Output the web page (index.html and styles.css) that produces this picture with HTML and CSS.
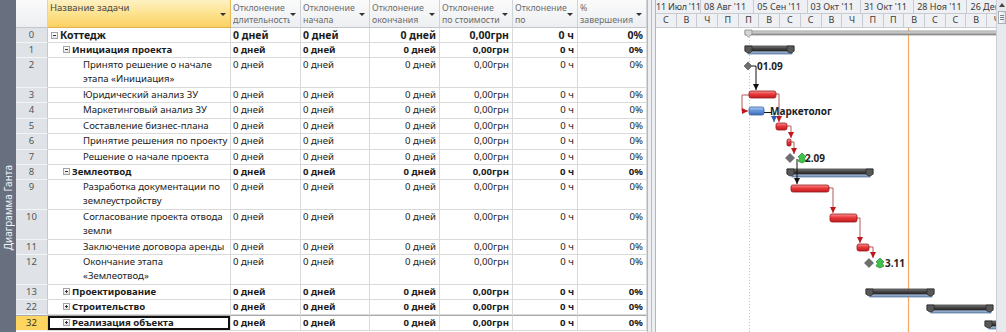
FILE: index.html
```html
<!DOCTYPE html>
<html lang="ru">
<head>
    <meta charset="UTF-8">
    <meta name="viewport" content="width=device-width, initial-scale=1.0">
    <title>Диаграмма Ганта</title>
    <link rel="stylesheet" href="styles.css">
</head>
<body>

<div class="window">
    <div class="view-bar"><span>Диаграмма Ганта</span></div>

    <div class="sheet">
        <div class="row head">
            <div class="cell num"></div>
            <div class="cell name"><span>Название задачи</span><i class="drop"></i></div>
            <div class="cell"><span>Отклонение<br>длительность</span><i class="drop"></i></div>
            <div class="cell"><span>Отклонение<br>начала</span><i class="drop"></i></div>
            <div class="cell"><span>Отклонение<br>окончания</span><i class="drop"></i></div>
            <div class="cell"><span>Отклонение<br>по стоимости</span><i class="drop"></i></div>
            <div class="cell"><span>Отклонение<br>по</span><i class="drop"></i></div>
            <div class="cell"><span>%<br>завершения</span><i class="drop"></i></div>
        </div>

        <div class="row sum project">
            <div class="cell num">0</div>
            <div class="cell name lvl0"><b class="toggle"></b>Коттедж</div>
            <div class="cell">0 дней</div>
            <div class="cell">0 дней</div>
            <div class="cell r">0 дней</div>
            <div class="cell r">0,00грн</div>
            <div class="cell r">0 ч</div>
            <div class="cell r">0%</div>
        </div>
        <div class="row sum">
            <div class="cell num">1</div>
            <div class="cell name lvl1"><b class="toggle"></b>Инициация проекта</div>
            <div class="cell">0 дней</div>
            <div class="cell">0 дней</div>
            <div class="cell r">0 дней</div>
            <div class="cell r">0,00грн</div>
            <div class="cell r">0 ч</div>
            <div class="cell r">0%</div>
        </div>
        <div class="row tall">
            <div class="cell num">2</div>
            <div class="cell name lvl2">Принято решение о начале<br>этапа «Инициация»</div>
            <div class="cell">0 дней</div>
            <div class="cell">0 дней</div>
            <div class="cell r">0 дней</div>
            <div class="cell r">0,00грн</div>
            <div class="cell r">0 ч</div>
            <div class="cell r">0%</div>
        </div>
        <div class="row">
            <div class="cell num">3</div>
            <div class="cell name lvl2">Юридический анализ ЗУ</div>
            <div class="cell">0 дней</div>
            <div class="cell">0 дней</div>
            <div class="cell r">0 дней</div>
            <div class="cell r">0,00грн</div>
            <div class="cell r">0 ч</div>
            <div class="cell r">0%</div>
        </div>
        <div class="row">
            <div class="cell num">4</div>
            <div class="cell name lvl2">Маркетинговый анализ ЗУ</div>
            <div class="cell">0 дней</div>
            <div class="cell">0 дней</div>
            <div class="cell r">0 дней</div>
            <div class="cell r">0,00грн</div>
            <div class="cell r">0 ч</div>
            <div class="cell r">0%</div>
        </div>
        <div class="row">
            <div class="cell num">5</div>
            <div class="cell name lvl2">Составление бизнес-плана</div>
            <div class="cell">0 дней</div>
            <div class="cell">0 дней</div>
            <div class="cell r">0 дней</div>
            <div class="cell r">0,00грн</div>
            <div class="cell r">0 ч</div>
            <div class="cell r">0%</div>
        </div>
        <div class="row">
            <div class="cell num">6</div>
            <div class="cell name lvl2">Принятие решения по проекту</div>
            <div class="cell">0 дней</div>
            <div class="cell">0 дней</div>
            <div class="cell r">0 дней</div>
            <div class="cell r">0,00грн</div>
            <div class="cell r">0 ч</div>
            <div class="cell r">0%</div>
        </div>
        <div class="row">
            <div class="cell num">7</div>
            <div class="cell name lvl2">Решение о начале проекта</div>
            <div class="cell">0 дней</div>
            <div class="cell">0 дней</div>
            <div class="cell r">0 дней</div>
            <div class="cell r">0,00грн</div>
            <div class="cell r">0 ч</div>
            <div class="cell r">0%</div>
        </div>
        <div class="row sum">
            <div class="cell num">8</div>
            <div class="cell name lvl1"><b class="toggle"></b>Землеотвод</div>
            <div class="cell">0 дней</div>
            <div class="cell">0 дней</div>
            <div class="cell r">0 дней</div>
            <div class="cell r">0,00грн</div>
            <div class="cell r">0 ч</div>
            <div class="cell r">0%</div>
        </div>
        <div class="row tall">
            <div class="cell num">9</div>
            <div class="cell name lvl2">Разработка документации по<br>землеустройству</div>
            <div class="cell">0 дней</div>
            <div class="cell">0 дней</div>
            <div class="cell r">0 дней</div>
            <div class="cell r">0,00грн</div>
            <div class="cell r">0 ч</div>
            <div class="cell r">0%</div>
        </div>
        <div class="row tall">
            <div class="cell num">10</div>
            <div class="cell name lvl2">Согласование проекта отвода<br>земли</div>
            <div class="cell">0 дней</div>
            <div class="cell">0 дней</div>
            <div class="cell r">0 дней</div>
            <div class="cell r">0,00грн</div>
            <div class="cell r">0 ч</div>
            <div class="cell r">0%</div>
        </div>
        <div class="row">
            <div class="cell num">11</div>
            <div class="cell name lvl2">Заключение договора аренды</div>
            <div class="cell">0 дней</div>
            <div class="cell">0 дней</div>
            <div class="cell r">0 дней</div>
            <div class="cell r">0,00грн</div>
            <div class="cell r">0 ч</div>
            <div class="cell r">0%</div>
        </div>
        <div class="row tall">
            <div class="cell num">12</div>
            <div class="cell name lvl2">Окончание этапа<br>«Землеотвод»</div>
            <div class="cell">0 дней</div>
            <div class="cell">0 дней</div>
            <div class="cell r">0 дней</div>
            <div class="cell r">0,00грн</div>
            <div class="cell r">0 ч</div>
            <div class="cell r">0%</div>
        </div>
        <div class="row sum">
            <div class="cell num">13</div>
            <div class="cell name lvl1"><b class="toggle plus"></b>Проектирование</div>
            <div class="cell">0 дней</div>
            <div class="cell">0 дней</div>
            <div class="cell r">0 дней</div>
            <div class="cell r">0,00грн</div>
            <div class="cell r">0 ч</div>
            <div class="cell r">0%</div>
        </div>
        <div class="row sum">
            <div class="cell num">22</div>
            <div class="cell name lvl1"><b class="toggle plus"></b>Строительство</div>
            <div class="cell">0 дней</div>
            <div class="cell">0 дней</div>
            <div class="cell r">0 дней</div>
            <div class="cell r">0,00грн</div>
            <div class="cell r">0 ч</div>
            <div class="cell r">0%</div>
        </div>
        <div class="row sum selected">
            <div class="cell num">32</div>
            <div class="cell name lvl1"><b class="toggle plus"></b>Реализация объекта</div>
            <div class="cell">0 дней</div>
            <div class="cell">0 дней</div>
            <div class="cell r">0 дней</div>
            <div class="cell r">0,00грн</div>
            <div class="cell r">0 ч</div>
            <div class="cell r">0%</div>
        </div>
    </div>

    <div class="splitter"></div>

    <div class="gantt">
        <div class="tier top">
            <span>11 Июл '11</span>
            <span>08 Авг '11</span>
            <span>05 Сен '11</span>
            <span>03 Окт '11</span>
            <span>31 Окт '11</span>
            <span>28 Ноя '11</span>
            <span>26 Дек '11</span>
        </div>
        <div class="tier bottom">
            <span>С</span><span>В</span><span>Ч</span><span>П</span><span>П</span><span>В</span>
            <span>С</span><span>С</span><span>В</span><span>Ч</span><span>П</span><span>П</span>
            <span>В</span><span>С</span><span>С</span><span>В</span><span>Ч</span>
        </div>

        <svg class="chart" width="340" height="305" viewBox="0 0 340 305">
            <defs>
                <linearGradient id="red" x1="0" y1="0" x2="0" y2="1">
                    <stop offset="0" stop-color="#fb9494"/>
                    <stop offset=".45" stop-color="#e8393b"/>
                    <stop offset="1" stop-color="#c21c1f"/>
                </linearGradient>
                <linearGradient id="blue" x1="0" y1="0" x2="0" y2="1">
                    <stop offset="0" stop-color="#b4d0f4"/>
                    <stop offset=".45" stop-color="#6496dc"/>
                    <stop offset="1" stop-color="#3f6cb4"/>
                </linearGradient>
                <linearGradient id="dark" x1="0" y1="0" x2="0" y2="1">
                    <stop offset="0" stop-color="#8c8c8c"/>
                    <stop offset=".4" stop-color="#4a4a4a"/>
                    <stop offset="1" stop-color="#2a2a2a"/>
                </linearGradient>
                <linearGradient id="base" x1="0" y1="0" x2="0" y2="1">
                    <stop offset="0" stop-color="#bccde4"/>
                    <stop offset="1" stop-color="#7592ba"/>
                </linearGradient>
                <linearGradient id="proj" x1="0" y1="0" x2="0" y2="1">
                    <stop offset="0" stop-color="#eeeeee"/>
                    <stop offset=".5" stop-color="#b8b8b8"/>
                    <stop offset="1" stop-color="#8e8e8e"/>
                </linearGradient>
                <marker id="ar-red" viewBox="0 0 6 6" refX="6" refY="3" markerWidth="6" markerHeight="6" markerUnits="userSpaceOnUse" orient="auto">
                    <path d="M0 0 L6 3 L0 6 z" fill="#c0161a"/>
                </marker>
                <marker id="ar-black" viewBox="0 0 6 6" refX="6" refY="3" markerWidth="6" markerHeight="6" markerUnits="userSpaceOnUse" orient="auto">
                    <path d="M0 0 L6 3 L0 6 z" fill="#111"/>
                </marker>
                <marker id="ar-blue" viewBox="0 0 6 6" refX="6" refY="3" markerWidth="6" markerHeight="6" markerUnits="userSpaceOnUse" orient="auto">
                    <path d="M0 0 L6 3 L0 6 z" fill="#2f5fae"/>
                </marker>
            </defs>

            <!-- project start and status date -->
            <line x1="93.5" y1="9" x2="93.5" y2="305" stroke="#c4c4c4" stroke-dasharray="1 2"/>
            <line x1="252.5" y1="0" x2="252.5" y2="305" stroke="#f7a860" stroke-width="1.2"/>

            <!-- project summary -->
            <rect x="89" y="3" width="260" height="4" fill="url(#proj)" stroke="#7d7d7d" stroke-width=".7"/>
            <path d="M89 2 h7 v4 l-3.5 3 l-3.5 -3 z" fill="#d4d4d4" stroke="#8a8a8a" stroke-width=".8"/>

            <!-- summaries -->
            <g stroke-width=".7">
                <rect x="92" y="22" width="44" height="4" fill="url(#base)" stroke="#52709a"/>
                <rect x="89" y="18" width="49" height="5" fill="url(#dark)" stroke="#262626"/>
                <path d="M89 18 h7 v5 q-3.5 4 -7 0 z" fill="#585858" stroke="#262626"/>
                <path d="M131 18 h7 v5 q-3.5 4 -7 0 z" fill="#585858" stroke="#262626"/>

                <rect x="136" y="145" width="78" height="4" fill="url(#base)" stroke="#52709a"/>
                <rect x="131" y="141" width="86" height="5" fill="url(#dark)" stroke="#262626"/>
                <path d="M131 141 h7 v5 q-3.5 4 -7 0 z" fill="#585858" stroke="#262626"/>
                <path d="M210 141 h7 v5 q-3.5 4 -7 0 z" fill="#585858" stroke="#262626"/>

                <rect x="214" y="265" width="62" height="4" fill="url(#base)" stroke="#52709a"/>
                <rect x="210" y="261" width="68" height="5" fill="url(#dark)" stroke="#262626"/>
                <path d="M210 261 h7 v5 q-3.5 4 -7 0 z" fill="#585858" stroke="#262626"/>
                <path d="M271 261 h7 v5 q-3.5 4 -7 0 z" fill="#585858" stroke="#262626"/>

                <rect x="275" y="281" width="60" height="4" fill="url(#base)" stroke="#52709a"/>
                <rect x="271" y="277" width="66" height="5" fill="url(#dark)" stroke="#262626"/>
                <path d="M271 277 h7 v5 q-3.5 4 -7 0 z" fill="#585858" stroke="#262626"/>
                <path d="M330 277 h7 v5 q-3.5 4 -7 0 z" fill="#585858" stroke="#262626"/>

                <rect x="333" y="297" width="20" height="4" fill="url(#base)" stroke="#52709a"/>
                <rect x="329" y="293" width="30" height="5" fill="url(#dark)" stroke="#262626"/>
                <path d="M329 293 h7 v5 q-3.5 4 -7 0 z" fill="#585858" stroke="#262626"/>
            </g>

            <!-- links -->
            <g fill="none" stroke-width="1">
                <path d="M96 38 H100 V62" stroke="#111" marker-end="url(#ar-black)"/>
                <path d="M93 67 H86 V83 H92" stroke="#b45a5a" marker-end="url(#ar-red)"/>
                <path d="M120 66 H123 V94" stroke="#b45a5a" marker-end="url(#ar-red)"/>
                <path d="M108 84.5 H116" stroke="#111"/>
                <path d="M118 85 V94" stroke="#2f5fae" marker-end="url(#ar-blue)"/>
                <path d="M131 98 H135 V110" stroke="#b45a5a" marker-end="url(#ar-red)"/>
                <path d="M135 114 H138 V126" stroke="#b45a5a" marker-end="url(#ar-red)"/>
                <path d="M141 131 V156" stroke="#111" marker-end="url(#ar-black)"/>
                <path d="M173 160 H177 V185" stroke="#b45a5a" marker-end="url(#ar-red)"/>
                <path d="M201 190 H204 V215" stroke="#b45a5a" marker-end="url(#ar-red)"/>
                <path d="M213 219 H217 V230" stroke="#b45a5a" marker-end="url(#ar-red)"/>
            </g>

            <!-- tasks -->
            <g fill="url(#red)" stroke="#98161a" stroke-width=".8">
                <rect x="93" y="63" width="27" height="7" rx="2"/>
                <rect x="120" y="95" width="11" height="7" rx="2"/>
                <rect x="131" y="111" width="4" height="7" rx="1.5"/>
                <rect x="135" y="157" width="38" height="7" rx="2"/>
                <rect x="174" y="186" width="27" height="8" rx="2"/>
                <rect x="201" y="216" width="12" height="7" rx="2"/>
            </g>
            <rect x="93" y="79" width="15" height="8" rx="2" fill="url(#blue)" stroke="#36609e" stroke-width=".8"/>

            <!-- milestones -->
            <g fill="#6f6f6f" stroke="#4a4a4a" stroke-width=".6">
                <path d="M92 34 L96 38 L92 42 L88 38 z"/>
                <path d="M134 125.5 L138.5 130 L134 134.5 L129.5 130 z"/>
                <path d="M213 230.5 L217.5 235 L213 239.5 L208.5 235 z"/>
            </g>
            <g fill="#3fc24a" stroke="#1f8a2a" stroke-width=".7">
                <path d="M146 125 L150 129 L148 130 L150 133 L146 135 L142 133 L144 130 L142 129 z"/>
                <path d="M224 230 L228 234 L226 235 L228 238 L224 240 L220 238 L222 235 L220 234 z"/>
            </g>

            <g class="label">
                <text x="101" y="41.5">01.09</text>
                <text x="114" y="86.5">Маркетолог</text>
                <text x="149" y="133.5">2.09</text>
                <text x="229" y="238.5">3.11</text>
            </g>
        </svg>
    </div>

    <div class="vscroll">
        <i class="up"></i>
        <i class="thumb"></i>
    </div>
</div>

</body>
</html>
```

FILE: styles.css
```css
html, body {
    margin: 0;
    padding: 0;
}
body {
    width: 1006px;
    height: 332px;
    overflow: hidden;
    font-family: "Noto Sans", "Open Sans", sans-serif;
    font-size: 10px;
    color: #1c1c1c;
    background-color: #fff;
}
.window {
    display: flex;
    height: 332px;
}

/* left view label */
.view-bar {
    width: 16px;
    flex: none;
    background-color: #687080;
    display: flex;
    align-items: flex-end;
    justify-content: center;
    padding-bottom: 82px;
    box-sizing: border-box;
}
.view-bar span {
    writing-mode: vertical-rl;
    transform: rotate(180deg);
    color: #f1f3f6;
    font-size: 10px;
    white-space: nowrap;
}

/* task sheet */
.sheet {
    width: 631px;
    flex: none;
    display: flex;
    flex-direction: column;
    font-size: 9.6px;
}
.row {
    display: grid;
    grid-template-columns: 32px 183px 70px 69px 70px 73px 65px 69px;
    height: 15.4px;
    flex: none;
}
.row.tall {
    height: 29.6px;
}
.row.head {
    height: 27.7px;
}
.cell {
    box-sizing: border-box;
    border-right: 1px solid #dadada;
    border-bottom: 1px solid #dadada;
    padding: 0 2px;
    line-height: 14px;
    overflow: hidden;
    white-space: nowrap;
}
.cell.r {
    text-align: right;
    padding-right: 3px;
}
.num {
    background-color: #dfe3e8;
    border-right-color: #c3c8cf;
    border-bottom-color: #f2f4f6;
    text-align: center;
    color: #555;
    font-size: 9.5px;
}
.sum .cell {
    font-weight: 700;
}
.sum .num {
    font-weight: 400;
}
.project .cell {
    font-size: 10.5px;
}
.project .num {
    font-size: 9.5px;
}
.name.lvl0 {
    padding-left: 3px;
}
.name.lvl1 {
    padding-left: 15px;
}
.name.lvl2 {
    padding-left: 35px;
}
.toggle {
    display: inline-block;
    box-sizing: border-box;
    width: 7px;
    height: 7px;
    margin-right: 2px;
    vertical-align: 0;
    border: 1px solid #a3a3a3;
    background:
        linear-gradient(#333, #333) center / 3px 1px no-repeat,
        linear-gradient(#fff, #e4e4e4);
}
.toggle.plus {
    background:
        linear-gradient(#333, #333) center / 3px 1px no-repeat,
        linear-gradient(#333, #333) center / 1px 3px no-repeat,
        linear-gradient(#fff, #e4e4e4);
}

/* header */
.head .cell {
    display: flex;
    justify-content: space-between;
    background: linear-gradient(#fbfbfb, #eceef1);
    border-right-color: #d0d3d8;
    border-bottom-color: #c3c7cd;
    color: #6c6c6c;
    font-size: 8.8px;
    line-height: 12px;
    padding-top: 2px;
}
.head .cell span {
    overflow: hidden;
}
.head .name {
    background: linear-gradient(#fef1c2, #fde28f 50%, #fbd062);
    border-right-color: #e3ba55;
    border-bottom-color: #e1b24a;
    color: #4a4a4a;
    font-size: 9.5px;
}
.drop {
    flex: none;
    align-self: center;
    margin: 0 2px 0 0;
    border-left: 3px solid transparent;
    border-right: 3px solid transparent;
    border-top: 3px solid #333;
}

/* selected row */
.selected .cell {
    border-top: 1px solid #a9a9a9;
}
.selected .num {
    background-color: #fcd660;
    color: #333;
}
.selected .name {
    box-shadow: inset 0 0 0 2px #111;
}

.splitter {
    width: 9px;
    flex: none;
    box-sizing: border-box;
    border-left: 1px solid #b3b8bf;
    border-right: 1px solid #b3b8bf;
    background: linear-gradient(to right, #eceef1 0 3px, #b9bec5 3px 4px, #eceef1 4px);
}

/* gantt */
.gantt {
    width: 340px;
    flex: none;
    display: flex;
    flex-direction: column;
    overflow: hidden;
}
.tier {
    display: flex;
    flex: none;
    height: 14px;
}
.tier.bottom {
    height: 13.7px;
}
.tier span {
    flex: none;
    box-sizing: border-box;
    border-right: 1px solid #c8ccd2;
    border-bottom: 1px solid #c8ccd2;
    background-color: #eef0f3;
    color: #3a3a3a;
    font-size: 9px;
    line-height: 13px;
    white-space: nowrap;
    overflow: hidden;
}
.tier.top span {
    width: 53.3px;
    padding-left: 3px;
}
.tier.top span:first-child {
    width: 45px;
    padding-left: 0;
    letter-spacing: -0.2px;
}
.tier.bottom span {
    width: 20.7px;
    text-align: center;
    line-height: 12px;
}
.chart {
    display: block;
    flex: none;
}
.label text {
    font-family: "Noto Sans", sans-serif;
    font-size: 10px;
    font-weight: 700;
    fill: #1e1e1e;
}

/* scrollbar */
.vscroll {
    width: 10px;
    flex: none;
    box-sizing: border-box;
    border-left: 1px solid #cdd1d6;
    background-color: #e6e9ed;
    display: flex;
    flex-direction: column;
    align-items: center;
}
.vscroll .up {
    margin-top: 3px;
    border-left: 3px solid transparent;
    border-right: 3px solid transparent;
    border-bottom: 4px solid #444;
}
.vscroll .thumb {
    box-sizing: border-box;
    width: 8px;
    height: 13px;
    margin-top: 4px;
    border: 1px solid #a9afb7;
    background:
        repeating-linear-gradient(#7b828c 0 1px, transparent 1px 2px) center / 4px 5px no-repeat,
        linear-gradient(to right, #fdfdfd, #dfe3e8);
}
```
